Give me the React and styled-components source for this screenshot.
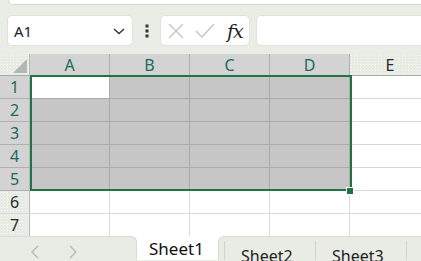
import React from "react";
import styled, { createGlobalStyle, css } from "styled-components";

const Global = createGlobalStyle`
  html, body { margin: 0; padding: 0; }
  body {
    width: 421px; height: 261px; overflow: hidden;
    background: #e9ede6;
    font-family: "Noto Sans", "Open Sans", sans-serif;
  }
`;

const dotted = css`
  background: radial-gradient(circle, rgba(255,255,255,0.75) 0.55px, transparent 0.9px) 0 0 / 3px 3px, #e6ebe3;
`;

const Page = styled.div`
  width: 421px; height: 261px; position: relative; overflow: hidden;
  display: flex; flex-direction: column;
`;

const TopStrip = styled.div`
  height: 4px; margin-left: 8px; background: #fff; flex: none;
  border-bottom: 1px solid #d3d6d1; border-left: 1px solid #d3d6d1;
  border-bottom-left-radius: 6px;
`;

const FormulaBar = styled.div`
  display: flex; align-items: stretch; height: 31px; flex: none;
  margin-top: 10px; padding-left: 7px;
`;

const NameBox = styled.div`
  width: 126px; flex: none; background: #fff; border: 1px solid #dfe1dd; border-radius: 5px;
  display: flex; align-items: center; justify-content: space-between;
  padding: 0 6px 0 6px; box-sizing: border-box;
  font-size: 15px; color: #222;
`;

const Dots = styled.div`
  width: 27px; flex: none; display: flex; align-items: center; justify-content: center;
`;

const FxBox = styled.div`
  width: 90px; flex: none; background: #fff; border: 1px solid #dfe1dd; border-radius: 5px;
  box-sizing: border-box; display: flex; align-items: center; padding-left: 6px; gap: 10px;
`;

const Fx = styled.span`
  font-family: "DejaVu Serif", "Liberation Serif", serif; font-style: italic; font-weight: 500;
  font-size: 19px; color: #222; margin-left: 2px; letter-spacing: -1px;
`;

const FormulaInput = styled.div`
  flex: 1; margin-left: 6px; background: #fff; border: 1px solid #dfe1dd;
  border-right: none; border-radius: 5px 0 0 5px;
`;

const Sheet = styled.div`
  margin-top: 8px; height: 182px; flex: none; overflow: hidden; position: relative;
  display: grid; grid-template-columns: 30px repeat(5, 80px);
  grid-template-rows: 22px repeat(7, 23px);
  background: #fff;
`;

const Corner = styled.div`
  ${dotted};
  border-bottom: 1px solid #a9aba8; border-right: 1px solid #b8bab7;
  position: relative; box-sizing: border-box;
  &::after {
    content: ""; position: absolute; right: 2px; bottom: 2px;
    border-left: 14px solid transparent; border-bottom: 14px solid #b4b6b3;
  }
`;

const ColHead = styled.div`
  box-sizing: border-box; display: flex; align-items: center; justify-content: center;
  font-size: 16px; padding-top: 1px;
  border-bottom: 1px solid #a9aba8;
  ${p => p.$sel ? css`background: #d3d3d3; color: #1c6a5b; border-right: 1px solid #b1b1b1;`
    : css`${dotted}; color: #2a2a2a;`}
`;

const RowHead = styled.div`
  box-sizing: border-box; display: flex; align-items: center; justify-content: center;
  font-size: 16px; border-right: 1px solid #b8bab7;
  ${p => p.$sel ? css`background: #d3d3d3; color: #1c6a5b; border-bottom: 1px solid #b1b1b1;`
    : css`${dotted}; color: #2a2a2a; border-bottom: 1px solid #dcdcdc;`}
`;

const Cell = styled.div`
  box-sizing: border-box;
  ${p => p.$sel
    ? css`background: ${p.$active ? "#fff" : "#c6c6c6"}; border-right: 1px solid #ababab; border-bottom: 1px solid #ababab;`
    : css`background: #fff; border-right: 1px solid #dadada; border-bottom: 1px solid #dadada;`}
`;

const Selection = styled.div`
  position: absolute; left: 29.5px; top: 21px; width: 322px; height: 116px;
  box-sizing: border-box; border: 2px solid #217346; pointer-events: none;
`;

const Handle = styled.div`
  position: absolute; left: 346px; top: 133px; width: 6px; height: 6px;
  background: #217346; border: 1px solid #fff;
`;

const TabBar = styled.div`
  height: 24px; flex: none; display: flex; align-items: stretch; background: #fff;
`;

const Nav = styled.div`
  width: 137px; flex: none; box-sizing: border-box; background: #e8ece5;
  border-top: 1px solid #d8dbd6; border-right: 1px solid #d8dbd6;
  border-top-right-radius: 6px; display: flex; align-items: flex-end;
  padding-left: 30px; gap: 28px; padding-bottom: 0;
`;

const ActiveTab = styled.div`
  width: 81px; flex: none; background: #fff; font-size: 17px; color: #111;
  padding-left: 12px; box-sizing: border-box; line-height: 24px; padding-top: 1px;
`;

const Others = styled.div`
  flex: 1; background: #e8ece5; border-top: 1px solid #d8dbd6; border-left: 1px solid #d8dbd6;
  border-top-left-radius: 6px; display: flex; padding-left: 5px;
`;

const Tab = styled.div`
  width: 91px; flex: none; box-sizing: border-box; border-left: 1px solid #cfd2cd;
  font-size: 16px; color: #222; padding-left: 16px; padding-top: 5px; line-height: 20px;
  margin-top: 4px;
`;

const cols = ["A", "B", "C", "D", "E"];

export default function App() {
  const rows = [1, 2, 3, 4, 5, 6, 7];
  return (
    <Page>
      <Global />
      <TopStrip />
      <FormulaBar>
        <NameBox>
          <span>A1</span>
          <svg width="14" height="10" viewBox="0 0 14 10"><path d="M2 3l5 4.5L12 3" fill="none" stroke="#333" strokeWidth="1.4" /></svg>
        </NameBox>
        <Dots>
          <svg width="4" height="14" viewBox="0 0 4 14">
            <rect x="0.5" y="0.5" width="3" height="3" fill="#333" />
            <rect x="0.5" y="5.5" width="3" height="3" fill="#333" />
            <rect x="0.5" y="10.5" width="3" height="3" fill="#333" />
          </svg>
        </Dots>
        <FxBox>
          <svg width="18" height="18" viewBox="0 0 18 18"><path d="M2 2l14 14M16 2L2 16" stroke="#c4c4c4" strokeWidth="1.3" fill="none" /></svg>
          <svg width="20" height="18" viewBox="0 0 20 18"><path d="M1 9l6 6L19 2" stroke="#c4c4c4" strokeWidth="1.3" fill="none" /></svg>
          <Fx>fx</Fx>
        </FxBox>
        <FormulaInput />
      </FormulaBar>
      <Sheet>
        <Corner />
        {cols.map((c, i) => <ColHead key={c} $sel={i < 4}>{c}</ColHead>)}
        {rows.map(r => (
          <React.Fragment key={r}>
            <RowHead $sel={r <= 5}>{r}</RowHead>
            {cols.map((c, i) => (
              <Cell key={c} $sel={r <= 5 && i < 4} $active={r === 1 && i === 0} />
            ))}
          </React.Fragment>
        ))}
        <Selection />
        <Handle />
      </Sheet>
      <TabBar>
        <Nav>
          <svg width="10" height="16" viewBox="0 0 10 16"><path d="M8 2L2 8l6 6" stroke="#b5b5b5" strokeWidth="1.3" fill="none" /></svg>
          <svg width="10" height="16" viewBox="0 0 10 16"><path d="M2 2l6 6-6 6" stroke="#b5b5b5" strokeWidth="1.3" fill="none" /></svg>
        </Nav>
        <ActiveTab>Sheet1</ActiveTab>
        <Others>
          <Tab>Sheet2</Tab>
          <Tab>Sheet3</Tab>
          <Tab />
        </Others>
      </TabBar>
    </Page>
  );
}
